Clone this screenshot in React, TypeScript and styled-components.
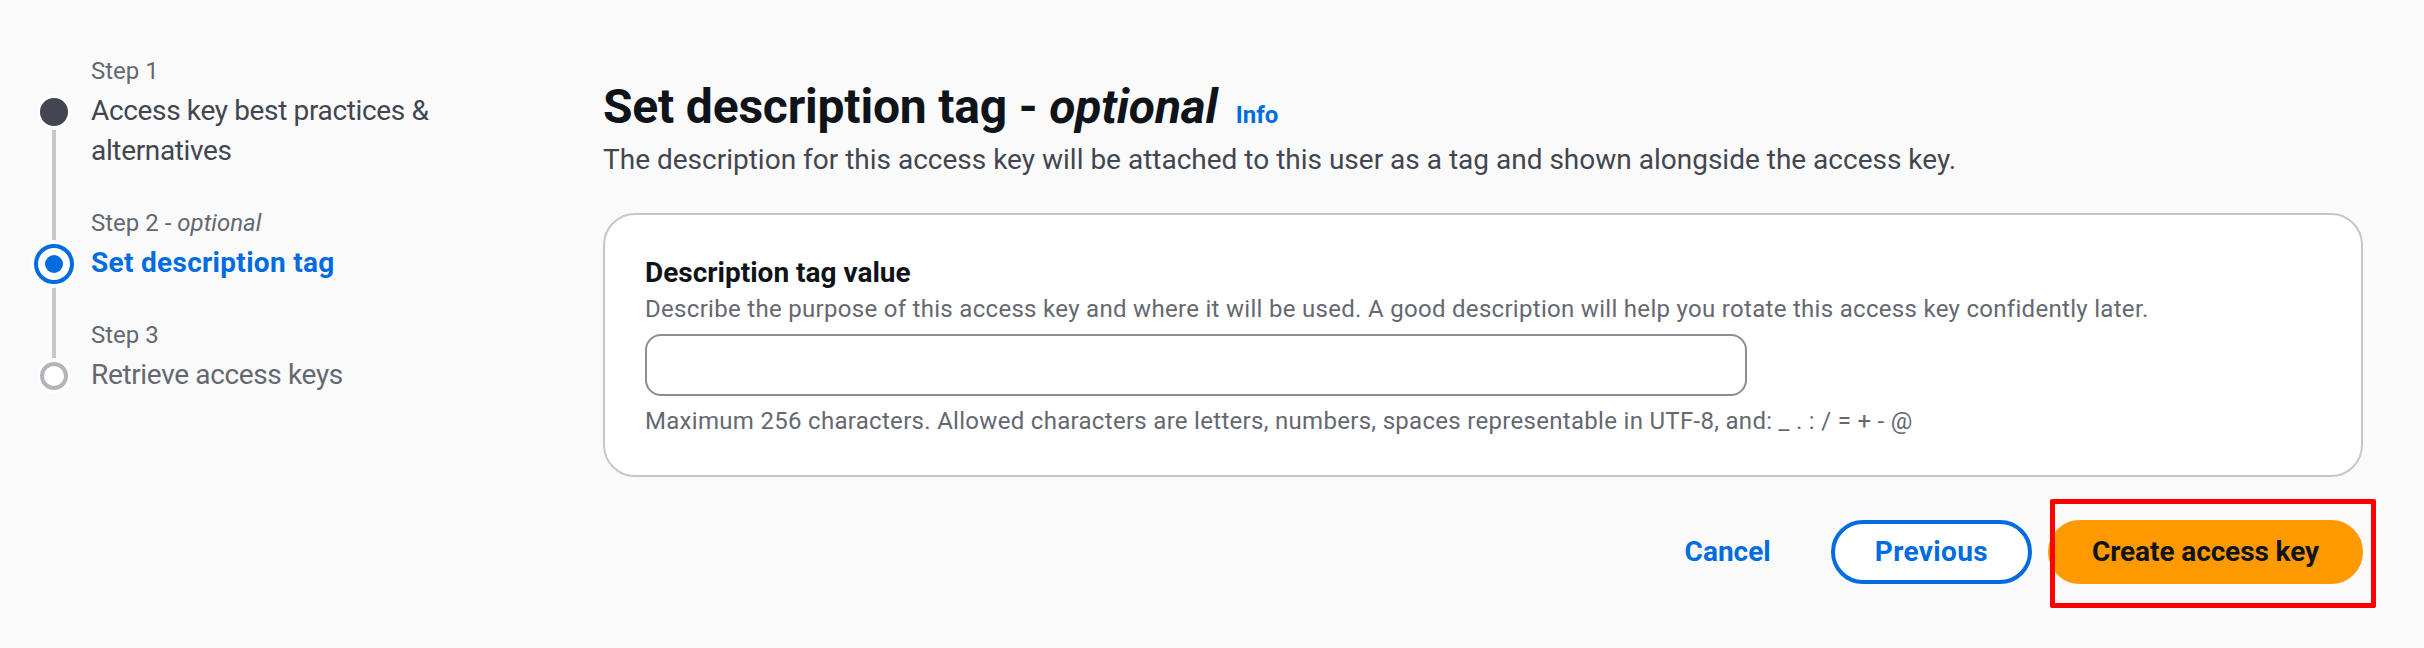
import React from "react";
import styled, { createGlobalStyle, css } from "styled-components";

const GlobalStyle = createGlobalStyle`
  html, body {
    margin: 0;
    padding: 0;
    background: #fafafa;
  }
  body {
    font-family: Roboto, "Liberation Sans", Arial, sans-serif;
    color: #0f141a;
    -webkit-font-smoothing: antialiased;
  }
  * { box-sizing: border-box; }
`;

const Page = styled.div`
  display: flex;
  align-items: flex-start;
  column-gap: 132px;
  min-height: 648px;
  padding: 0 61px 0 33px;
  background: #fafafa;
`;

/* ---------- Wizard navigation ---------- */

const Nav = styled.nav`
  flex: 0 0 438px;
  padding-top: 53px;
  display: flex;
  flex-direction: column;
`;

const Step = styled.div`
  display: flex;
  align-items: stretch;
  column-gap: 17px;
`;

const Indicator = styled.div`
  flex: 0 0 41px;
  display: flex;
  flex-direction: column;
  align-items: center;
`;

const Segment = styled.div<{ $height?: number; $hidden?: boolean; $grow?: boolean }>`
  width: 4px;
  background: ${(p) => (p.$hidden ? "transparent" : "#c6c6cd")};
  ${(p) =>
    p.$grow
      ? css`
          flex: 1 1 auto;
          margin-top: 4px;
        `
      : css`
          flex: 0 0 ${p.$height}px;
          margin-bottom: 4px;
        `}
`;

type DotKind = "visited" | "current" | "upcoming";

const Dot = styled.div<{ $kind: DotKind }>`
  flex: 0 0 auto;
  border-radius: 50%;
  box-shadow: 0 0 0 3px #ffffff;
  display: flex;
  align-items: center;
  justify-content: center;
  ${(p) =>
    p.$kind === "visited" &&
    css`
      width: 28px;
      height: 28px;
      background: #424650;
    `}
  ${(p) =>
    p.$kind === "upcoming" &&
    css`
      width: 28px;
      height: 28px;
      background: #ffffff;
      border: 4px solid #b4b4bb;
    `}
  ${(p) =>
    p.$kind === "current" &&
    css`
      width: 40px;
      height: 40px;
      background: #ffffff;
      border: 4px solid #006ce0;
      &::after {
        content: "";
        width: 18px;
        height: 18px;
        border-radius: 50%;
        background: #006ce0;
      }
    `}
`;

const StepText = styled.div<{ $last?: boolean }>`
  flex: 1 1 auto;
  min-width: 0;
  display: flex;
  flex-direction: column;
  padding-bottom: ${(p) => (p.$last ? "0" : "34px")};
`;

const StepLabel = styled.div`
  font-size: 24px;
  line-height: 36px;
  color: #656871;
  em {
    font-style: italic;
    line-height: 0;
  }
`;

const StepTitle = styled.div<{ $kind: DotKind }>`
  margin-top: 2px;
  font-size: 28px;
  line-height: 40px;
  letter-spacing: -0.35px;
  color: ${(p) => (p.$kind === "upcoming" ? "#656871" : p.$kind === "current" ? "#006ce0" : "#424650")};
  font-weight: ${(p) => (p.$kind === "current" ? 700 : 400)};
  ${(p) => p.$kind === "current" && css`letter-spacing: 0.3px;`}
`;

/* ---------- Main content ---------- */

const Main = styled.main`
  flex: 1 1 auto;
  min-width: 0;
  padding-top: 77px;
  display: flex;
  flex-direction: column;
`;

const Heading = styled.h1`
  margin: 0;
  font-size: 48px;
  line-height: 60px;
  font-weight: 700;
  letter-spacing: -0.2px;
  color: #0f141a;
  em {
    font-style: italic;
    line-height: 0;
  }
`;

const InfoLink = styled.a`
  margin-left: 18px;
  font-size: 24px;
  line-height: 1;
  font-weight: 700;
  letter-spacing: 0;
  color: #006ce0;
  text-decoration: none;
  cursor: pointer;
`;

const Description = styled.p`
  margin: 3px 0 0;
  font-size: 28px;
  line-height: 40px;
  color: #424650;
`;

const Card = styled.section`
  margin-top: 33px;
  background: #ffffff;
  border: 2px solid #c6c6cd;
  border-radius: 32px;
  padding: 38px 40px;
  display: flex;
  flex-direction: column;
`;

const FieldLabel = styled.label`
  font-size: 28px;
  line-height: 40px;
  font-weight: 700;
  color: #0f141a;
`;

const SmallText = styled.div<{ $gapTop?: number }>`
  margin-top: ${(p) => p.$gapTop ?? 0}px;
  font-size: 24px;
  line-height: 32px;
  letter-spacing: 0.3px;
  color: #656871;
`;

const TextInput = styled.input`
  margin-top: 9px;
  width: 1102px;
  height: 62px;
  padding: 0 22px;
  border: 2px solid #8c8c94;
  border-radius: 16px;
  background: #ffffff;
  font-family: inherit;
  font-size: 28px;
  color: #0f141a;
  outline: none;
`;

const Actions = styled.div`
  margin-top: 43px;
  display: flex;
  justify-content: flex-end;
  align-items: center;
  column-gap: 16px;
`;

type BtnVariant = "link" | "normal" | "primary";

const Button = styled.button<{ $variant: BtnVariant }>`
  height: 64px;
  padding: 0 40px;
  border-radius: 40px;
  border: 4px solid transparent;
  font-family: inherit;
  font-size: 28px;
  font-weight: 700;
  line-height: 40px;
  cursor: pointer;
  display: inline-flex;
  align-items: center;
  ${(p) =>
    p.$variant === "link" &&
    css`
      background: transparent;
      color: #006ce0;
    `}
  ${(p) =>
    p.$variant === "normal" &&
    css`
      background: #ffffff;
      border-color: #006ce0;
      color: #006ce0;
      letter-spacing: 0.35px;
    `}
  ${(p) =>
    p.$variant === "primary" &&
    css`
      background: #ff9900;
      border-color: #ff9900;
      color: #0f141a;
      letter-spacing: -0.1px;
    `}
`;

const Highlighted = styled.div`
  position: relative;
  display: inline-flex;
`;

const HighlightFrame = styled.span`
  position: absolute;
  left: 2px;
  top: -21px;
  width: 326px;
  height: 109px;
  border: 5px solid #ff0000;
  border-radius: 2px;
  pointer-events: none;
`;

type StepDef = { label: React.ReactNode; title: string; kind: DotKind };

const steps: StepDef[] = [
  { label: "Step 1", title: "Access key best practices & alternatives", kind: "visited" },
  {
    label: (
      <>
        Step 2 - <em>optional</em>
      </>
    ),
    title: "Set description tag",
    kind: "current",
  },
  { label: "Step 3", title: "Retrieve access keys", kind: "upcoming" },
];

const dotRadius = (k: DotKind) => (k === "current" ? 20 : 14);

export default function App() {
  return (
    <>
      <GlobalStyle />
      <Page>
        <Nav>
          {steps.map((s, i) => {
            const last = i === steps.length - 1;
            return (
              <Step key={i}>
                <Indicator>
                  <Segment $height={55 - dotRadius(s.kind)} $hidden={i === 0} />
                  <Dot $kind={s.kind} />
                  {!last && <Segment $grow />}
                </Indicator>
                <StepText $last={last}>
                  <StepLabel>{s.label}</StepLabel>
                  <StepTitle $kind={s.kind}>{s.title}</StepTitle>
                </StepText>
              </Step>
            );
          })}
        </Nav>
        <Main>
          <Heading>
            Set description tag - <em>optional</em>
            <InfoLink>Info</InfoLink>
          </Heading>
          <Description>
            The description for this access key will be attached to this user as a tag and shown alongside the access
            key.
          </Description>
          <Card>
            <FieldLabel htmlFor="desc-tag">Description tag value</FieldLabel>
            <SmallText>
              Describe the purpose of this access key and where it will be used. A good description will help you rotate
              this access key confidently later.
            </SmallText>
            <TextInput id="desc-tag" type="text" />
            <SmallText $gapTop={9}>
              Maximum 256 characters. Allowed characters are letters, numbers, spaces representable in UTF-8, and: _ . :
              / = + - @
            </SmallText>
          </Card>
          <Actions>
            <Button $variant="link">Cancel</Button>
            <Button $variant="normal">Previous</Button>
            <Highlighted>
              <Button $variant="primary">Create access key</Button>
              <HighlightFrame />
            </Highlighted>
          </Actions>
        </Main>
      </Page>
    </>
  );
}
